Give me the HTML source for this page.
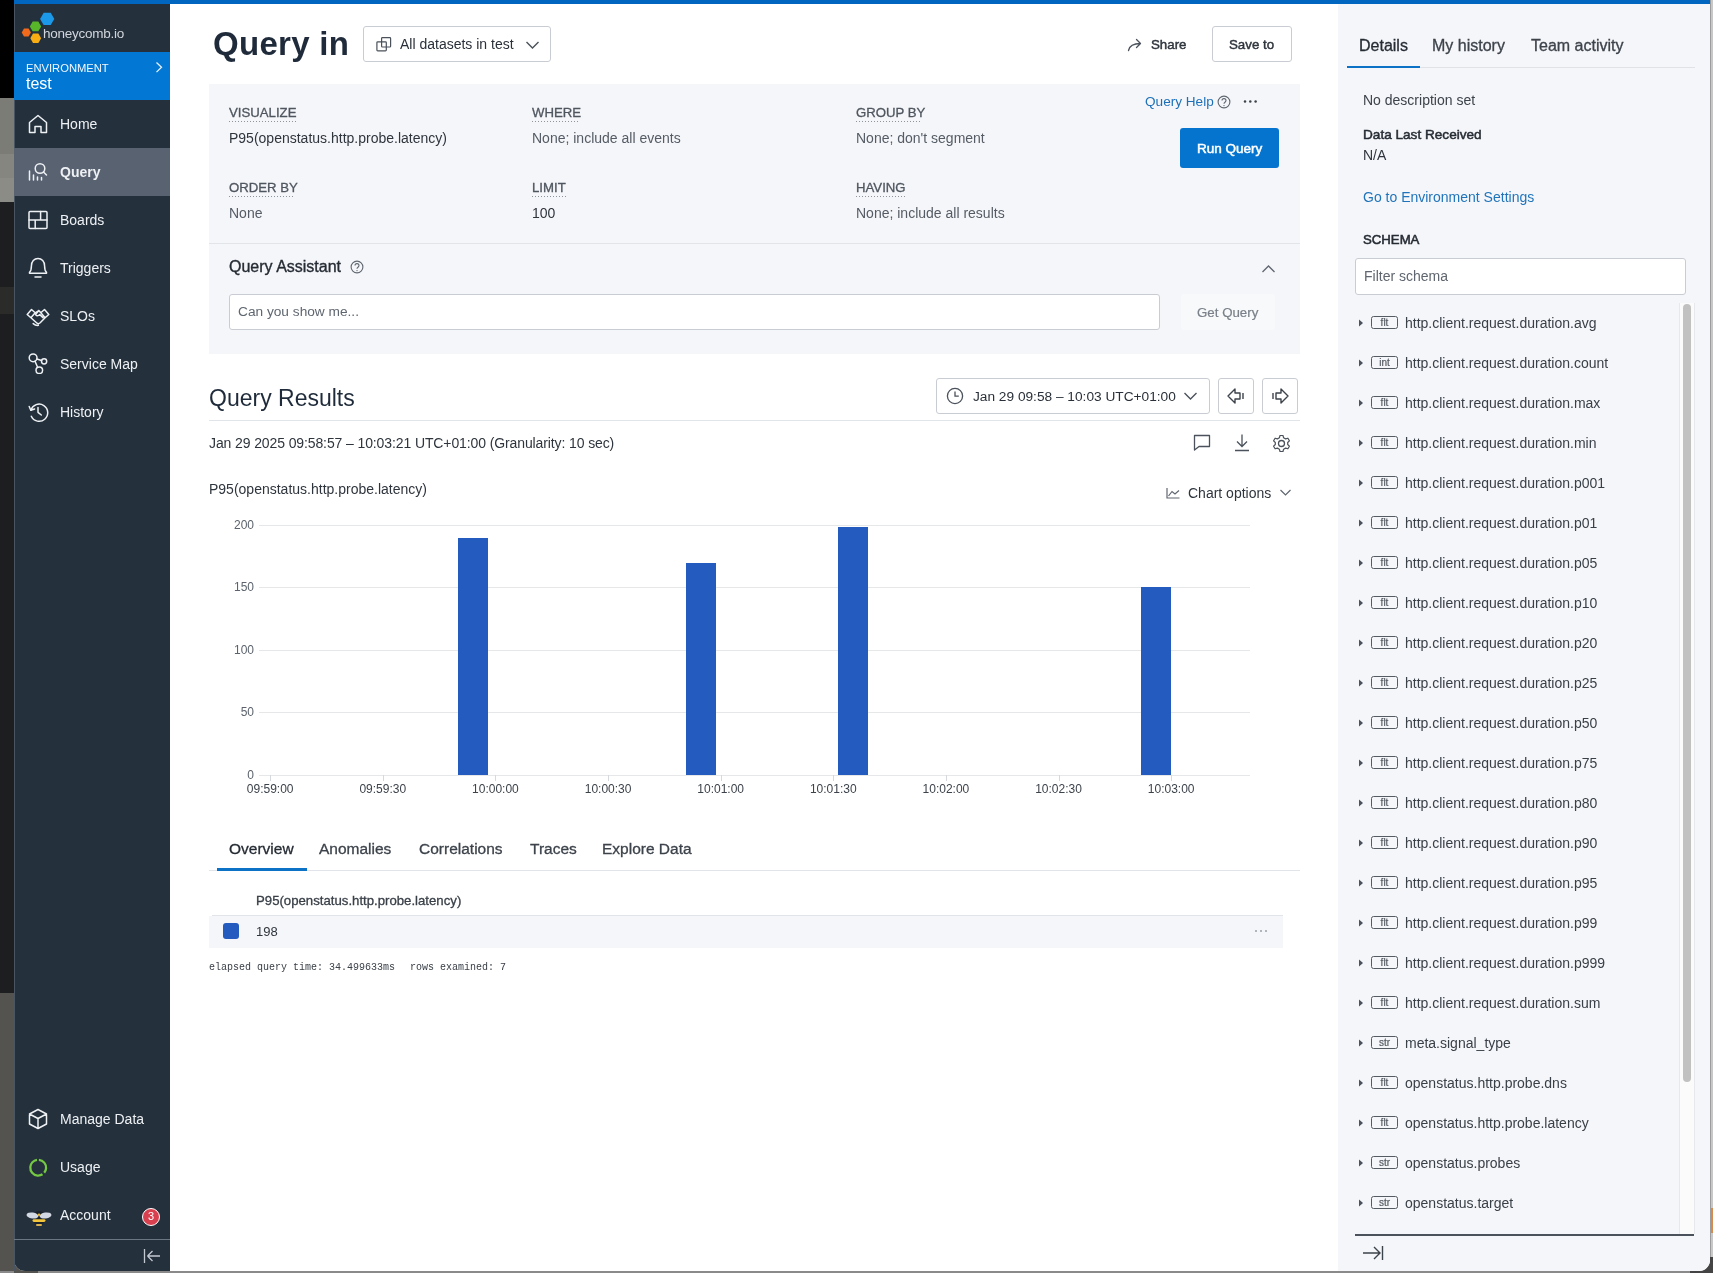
<!DOCTYPE html>
<html><head><meta charset="utf-8">
<style>
*{box-sizing:border-box;margin:0;padding:0}
html,body{width:1713px;height:1273px;overflow:hidden;background:#c8c8c8;font-family:"Liberation Sans",sans-serif;color:#2a3039}
.a{position:absolute;white-space:nowrap}
#root{position:absolute;left:0;top:0;width:1713px;height:1273px;will-change:transform}
</style></head><body>
<div id="root"><div class="a" style="left:0px;top:0px;width:14px;height:98px;background:#000"></div><div class="a" style="left:0px;top:98px;width:14px;height:56px;background:#7c7c77"></div><div class="a" style="left:0px;top:154px;width:14px;height:24px;background:#868681"></div><div class="a" style="left:0px;top:178px;width:14px;height:24px;background:#8c8c87"></div><div class="a" style="left:0px;top:202px;width:14px;height:791px;background:#1d1e20"></div><div class="a" style="left:0px;top:993px;width:14px;height:280px;background:#55534f"></div><div class="a" style="left:1710px;top:0px;width:1px;height:1273px;background:#9c9c9c"></div><div class="a" style="left:0px;top:1271px;width:1713px;height:2px;background:#8a8a8a"></div><div class="a" style="left:14px;top:1250px;width:24px;height:23px;background:#55534f"></div><div class="a" style="left:1690px;top:1257px;width:23px;height:16px;background:#444444"></div><div class="a" style="left:1711px;top:1208px;width:2px;height:25px;background:#d9894a"></div><div class="a" style="left:0px;top:287px;width:14px;height:27px;background:#2b2b29"></div><div class="a" style="left:14px;top:0px;width:1696px;height:1271px;background:#fff;border-radius:0 0 11px 11px;overflow:hidden"></div><div class="a" style="left:14px;top:0px;width:1696px;height:4px;background:#0166bf"></div><div class="a" style="left:14px;top:4px;width:156px;height:1267px;background:#24303c;border-bottom-left-radius:11px"></div><div class="a" style="left:14px;top:4px;width:1px;height:1267px;background:#4a5563"></div><div class="a" style="left:1338px;top:4px;width:372px;height:1267px;background:#f5f6f9;border-bottom-right-radius:11px"></div><svg class="a" style="left:20px;top:10px;" width="36" height="36" viewBox="0 0 36 36" fill="none"><polygon points="34.30,8.90 30.75,15.05 23.65,15.05 20.10,8.90 23.65,2.75 30.75,2.75" fill="#1c98e8"/><polygon points="21.20,16.40 18.35,21.34 12.65,21.34 9.80,16.40 12.65,11.46 18.35,11.46" fill="#58b52a"/><polygon points="10.90,22.40 8.60,26.38 4.00,26.38 1.70,22.40 4.00,18.42 8.60,18.42" fill="#f26b1d"/><polygon points="21.10,28.30 18.40,32.98 13.00,32.98 10.30,28.30 13.00,23.62 18.40,23.62" fill="#f8ad13"/></svg><div class="a" style="left:43px;top:26.52px;font-size:13.5px;line-height:13.5px;font-weight:400;color:#d2d6dc;letter-spacing:-0.25px;">honeycomb.io</div><div class="a" style="left:14px;top:52px;width:156px;height:48px;background:#0278d4"></div><div class="a" style="left:26px;top:63.48px;font-size:11.2px;line-height:11.2px;font-weight:400;color:#f2f7fc;">ENVIRONMENT</div><div class="a" style="left:26px;top:76.40px;font-size:16px;line-height:16px;font-weight:400;color:#ffffff;">test</div><svg class="a" style="left:155px;top:61px;" width="10" height="14" viewBox="0 0 10 14" fill="none"><path d="M1.5 1.5 L6.5 6.3 L1.5 11.1" stroke="#e8f1fa" stroke-width="1.3"/></svg><div class="a" style="left:14px;top:148px;width:156px;height:48px;background:#596271"></div><div class="a" style="left:60px;top:117.10px;font-size:14px;line-height:14px;font-weight:400;color:#eef1f4;">Home</div><div class="a" style="left:60px;top:165.10px;font-size:14px;line-height:14px;font-weight:700;color:#eef1f4;">Query</div><div class="a" style="left:60px;top:213.10px;font-size:14px;line-height:14px;font-weight:400;color:#eef1f4;">Boards</div><div class="a" style="left:60px;top:261.10px;font-size:14px;line-height:14px;font-weight:400;color:#eef1f4;">Triggers</div><div class="a" style="left:60px;top:309.10px;font-size:14px;line-height:14px;font-weight:400;color:#eef1f4;">SLOs</div><div class="a" style="left:60px;top:357.10px;font-size:14px;line-height:14px;font-weight:400;color:#eef1f4;">Service Map</div><div class="a" style="left:60px;top:405.10px;font-size:14px;line-height:14px;font-weight:400;color:#eef1f4;">History</div><svg class="a" style="left:28px;top:114px;" width="20" height="20" viewBox="0 0 20 20" fill="none"><path d="M1.5 8.5 L10 1.5 L18.5 8.5 V18.5 H13 V12.5 H7 V18.5 H1.5 Z" stroke="#eef1f4" stroke-width="1.5" stroke-linecap="round" stroke-linejoin="round"/></svg><svg class="a" style="left:28px;top:162px;" width="20" height="20" viewBox="0 0 20 20" fill="none"><path d="M1.5 9 V18 M5.5 13 V18 M9.5 15 V18 M13.5 15.5 V18" stroke="#eef1f4" stroke-width="1.5" stroke-linecap="round" stroke-linejoin="round"/><circle cx="12" cy="6.5" r="4.8" stroke="#eef1f4" stroke-width="1.5" stroke-linecap="round" stroke-linejoin="round"/><path d="M15.5 10 L18.5 13" stroke="#eef1f4" stroke-width="1.5" stroke-linecap="round" stroke-linejoin="round"/></svg><svg class="a" style="left:28px;top:210px;" width="20" height="20" viewBox="0 0 20 20" fill="none"><rect x="1" y="1.5" width="18" height="17" rx="1" stroke="#eef1f4" stroke-width="1.5" stroke-linecap="round" stroke-linejoin="round"/><path d="M1 10 H19 M12.6 1.5 V10 M7.2 10 V18.5" stroke="#eef1f4" stroke-width="1.5" stroke-linecap="round" stroke-linejoin="round"/></svg><svg class="a" style="left:28px;top:257px;" width="20" height="22" viewBox="0 0 20 22" fill="none"><path d="M1.5 16.3 H18.5 V15.3 C17 14 16.6 12 16.6 9 C16.6 4.6 13.8 1.5 10 1.5 C6.2 1.5 3.4 4.6 3.4 9 C3.4 12 3 14 1.5 15.3 Z M7 20 H13" stroke="#eef1f4" stroke-width="1.5" stroke-linecap="round" stroke-linejoin="round"/></svg><svg class="a" style="left:26px;top:306px;" width="24" height="22" viewBox="0 0 24 22" fill="none"><path d="M1.2 8.5 L5.5 3.5 L9.2 6.8 L4.9 11.8 Z M22.8 8.5 L18.5 3.5 L14.8 6.8 L19.1 11.8 Z M9.2 6.8 L12.8 4.6 L14.8 6.8 M4.9 11.8 L10.8 17 C11.8 17.9 13.2 17.7 14.2 16.8 L19.1 11.8 M12.8 4.6 L9.6 8.6 C10.6 10.2 12.3 10.2 13.8 8.6 L17 11.6 M7.2 17.6 C8.8 19 10.6 19.6 12.4 19.3" stroke="#eef1f4" stroke-width="1.5" stroke-linecap="round" stroke-linejoin="round" stroke-width="1.4"/></svg><svg class="a" style="left:28px;top:352px;" width="20" height="22" viewBox="0 0 20 22" fill="none"><circle cx="5.1" cy="5.8" r="3.9" stroke="#eef1f4" stroke-width="1.5" stroke-linecap="round" stroke-linejoin="round"/><circle cx="16.1" cy="9.3" r="2.6" stroke="#eef1f4" stroke-width="1.5" stroke-linecap="round" stroke-linejoin="round"/><circle cx="11.3" cy="18.2" r="3.3" stroke="#eef1f4" stroke-width="1.5" stroke-linecap="round" stroke-linejoin="round"/><path d="M8.9 7 L13.6 8.5 M7 9.2 L9.6 15.3" stroke="#eef1f4" stroke-width="1.5" stroke-linecap="round" stroke-linejoin="round"/></svg><svg class="a" style="left:27px;top:401px;" width="22" height="22" viewBox="0 0 22 22" fill="none"><path d="M2.2 5.5 L3.8 9.3 L7.6 8" stroke="#eef1f4" stroke-width="1.5" stroke-linecap="round" stroke-linejoin="round"/><path d="M3.9 9.2 A8.6 8.6 0 1 1 4.3 15.3" stroke="#eef1f4" stroke-width="1.5" stroke-linecap="round" stroke-linejoin="round"/><path d="M11 6.5 V11.3 L14.3 14" stroke="#eef1f4" stroke-width="1.5" stroke-linecap="round" stroke-linejoin="round"/></svg><div class="a" style="left:60px;top:1112.10px;font-size:14px;line-height:14px;font-weight:400;color:#eef1f4;">Manage Data</div><div class="a" style="left:60px;top:1160.10px;font-size:14px;line-height:14px;font-weight:400;color:#eef1f4;">Usage</div><div class="a" style="left:60px;top:1208.10px;font-size:14px;line-height:14px;font-weight:400;color:#eef1f4;">Account</div><svg class="a" style="left:28px;top:1108px;" width="20" height="22" viewBox="0 0 20 22" fill="none"><path d="M10 1.5 L18.5 6 V16 L10 20.5 L1.5 16 V6 Z M1.5 6 L10 10.5 L18.5 6 M10 10.5 V20.5" stroke="#eef1f4" stroke-width="1.5" stroke-linecap="round" stroke-linejoin="round"/></svg><svg class="a" style="left:28px;top:1157px;" width="22" height="22" viewBox="0 0 22 22" fill="none"><circle cx="10.2" cy="10.7" r="7.9" stroke="#74c843" stroke-width="2.3" stroke-dasharray="17.2 2.2 28 2.2" transform="rotate(-85 10.2 10.7)"/></svg><svg class="a" style="left:25px;top:1206px;" width="28" height="24" viewBox="0 0 28 24" fill="none"><ellipse cx="14" cy="12" rx="6.5" ry="7" fill="#1b222b"/><ellipse cx="7.5" cy="9.5" rx="6" ry="3" fill="#d3d9e2" transform="rotate(8 7.5 9.5)"/><ellipse cx="20.5" cy="9.5" rx="6" ry="3" fill="#d3d9e2" transform="rotate(-8 20.5 9.5)"/><circle cx="14" cy="8.8" r="1.3" fill="#e8b830"/><rect x="7.5" y="13.2" width="13" height="2.8" rx="1.4" fill="#f2c53a"/><rect x="11" y="18" width="6" height="2" rx="1" fill="#d9b050"/></svg><div class="a" style="left:142px;top:1208px;width:18px;height:18px;border-radius:50%;background:#d8404f;border:1.5px solid #fff;color:#fff;font-size:11px;line-height:15px;text-align:center">3</div><div class="a" style="left:14px;top:1239px;width:156px;height:1px;background:#6b7683"></div><svg class="a" style="left:143px;top:1248px;" width="18" height="16" viewBox="0 0 18 16" fill="none"><path d="M1.5 1 V15 M4.5 8 H17 M4.5 8 L9.5 3 M4.5 8 L9.5 13" stroke="#c3c9d1" stroke-width="1.3"/></svg><div class="a" style="left:213px;top:26.95px;font-size:33px;line-height:33px;font-weight:700;color:#1f2b3a;letter-spacing:0.3px;">Query in</div><div class="a" style="left:363px;top:26px;width:188px;height:36px;border:1px solid #c9cdd3;border-radius:3px;background:#fff"></div><svg class="a" style="left:376px;top:36px;" width="16" height="16" viewBox="0 0 16 16" fill="none"><rect x="5.6" y="1.7" width="9" height="9.3" rx="0.8" stroke="#4b525b" stroke-width="1.2"/><rect x="0.9" y="5.8" width="9.4" height="9" rx="0.8" stroke="#4b525b" stroke-width="1.2"/></svg><div class="a" style="left:400px;top:37.10px;font-size:14px;line-height:14px;font-weight:400;color:#2a3039;">All datasets in test</div><svg class="a" style="left:525px;top:39.5px;" width="16" height="10" viewBox="0 0 16 10" fill="none"><path d="M1.5 2 L7.5 8 L13.5 2" stroke="#4b525b" stroke-width="1.4"/></svg><svg class="a" style="left:1127px;top:38px;" width="16" height="14" viewBox="0 0 16 14" fill="none"><path d="M1.5 12.5 C2.5 7.5 6 5.5 13.5 5.5 M9.5 1.5 L13.5 5.5 L9.5 9.5" stroke="#4b525b" stroke-width="1.3" stroke-linecap="round" stroke-linejoin="round"/></svg><div class="a" style="left:1151px;top:37.70px;font-size:13.3px;line-height:13.3px;font-weight:400;color:#2f353d;-webkit-text-stroke:0.45px;">Share</div><div class="a" style="left:1212px;top:26px;width:80px;height:36px;border:1px solid #c9cdd3;border-radius:3px;background:#fff"></div><div class="a" style="left:1229px;top:37.70px;font-size:13.3px;line-height:13.3px;font-weight:400;color:#2f353d;-webkit-text-stroke:0.45px;">Save to</div><div class="a" style="left:209px;top:84px;width:1091px;height:270px;background:#f5f6f9"></div><div class="a" style="left:209px;top:243px;width:1091px;height:1px;background:#e1e4e8"></div><div class="a" style="left:229px;top:105.78px;font-size:13.2px;line-height:13.2px;font-weight:400;color:#4f565f;-webkit-text-stroke:0.3px;">VISUALIZE</div><div class="a" style="left:229px;top:121px;width:67px;height:1px;background-image:linear-gradient(90deg,#8e949c 50%,transparent 50%);background-size:3px 1px"></div><div class="a" style="left:532px;top:105.78px;font-size:13.2px;line-height:13.2px;font-weight:400;color:#4f565f;-webkit-text-stroke:0.3px;">WHERE</div><div class="a" style="left:532px;top:121px;width:47px;height:1px;background-image:linear-gradient(90deg,#8e949c 50%,transparent 50%);background-size:3px 1px"></div><div class="a" style="left:856px;top:105.78px;font-size:13.2px;line-height:13.2px;font-weight:400;color:#4f565f;-webkit-text-stroke:0.3px;">GROUP BY</div><div class="a" style="left:856px;top:121px;width:66px;height:1px;background-image:linear-gradient(90deg,#8e949c 50%,transparent 50%);background-size:3px 1px"></div><div class="a" style="left:229px;top:180.78px;font-size:13.2px;line-height:13.2px;font-weight:400;color:#4f565f;-webkit-text-stroke:0.3px;">ORDER BY</div><div class="a" style="left:229px;top:196px;width:65px;height:1px;background-image:linear-gradient(90deg,#8e949c 50%,transparent 50%);background-size:3px 1px"></div><div class="a" style="left:532px;top:180.78px;font-size:13.2px;line-height:13.2px;font-weight:400;color:#4f565f;-webkit-text-stroke:0.3px;">LIMIT</div><div class="a" style="left:532px;top:196px;width:36px;height:1px;background-image:linear-gradient(90deg,#8e949c 50%,transparent 50%);background-size:3px 1px"></div><div class="a" style="left:856px;top:180.78px;font-size:13.2px;line-height:13.2px;font-weight:400;color:#4f565f;-webkit-text-stroke:0.3px;">HAVING</div><div class="a" style="left:856px;top:196px;width:50px;height:1px;background-image:linear-gradient(90deg,#8e949c 50%,transparent 50%);background-size:3px 1px"></div><div class="a" style="left:229px;top:131.10px;font-size:14px;line-height:14px;font-weight:400;color:#2f353d;">P95(openstatus.http.probe.latency)</div><div class="a" style="left:532px;top:131.10px;font-size:14px;line-height:14px;font-weight:400;color:#555c65;">None; include all events</div><div class="a" style="left:856px;top:131.10px;font-size:14px;line-height:14px;font-weight:400;color:#555c65;">None; don&#39;t segment</div><div class="a" style="left:229px;top:206.10px;font-size:14px;line-height:14px;font-weight:400;color:#555c65;">None</div><div class="a" style="left:532px;top:206.10px;font-size:14px;line-height:14px;font-weight:400;color:#2f353d;">100</div><div class="a" style="left:856px;top:206.10px;font-size:14px;line-height:14px;font-weight:400;color:#555c65;">None; include all results</div><div class="a" style="left:1145px;top:95.44px;font-size:13.6px;line-height:13.6px;font-weight:400;color:#1d70b8;">Query Help</div><svg class="a" style="left:1217px;top:95px;" width="14" height="14" viewBox="0 0 14 14" fill="none"><circle cx="7" cy="7" r="5.9" stroke="#5f666f" stroke-width="1.1"/><path d="M5 5.6 C5 3 9 3 9 5.6 C9 7.2 7 7.2 7 8.8" stroke="#5f666f" stroke-width="1.1"/><circle cx="7" cy="10.6" r="0.7" fill="#5f666f"/></svg><svg class="a" style="left:1243px;top:99px;" width="15" height="5" viewBox="0 0 15 5" fill="none"><circle cx="2" cy="2.5" r="1.25" fill="#3d434b"/><circle cx="7.3" cy="2.5" r="1.25" fill="#3d434b"/><circle cx="12.6" cy="2.5" r="1.25" fill="#3d434b"/></svg><div class="a" style="left:1180px;top:128px;width:99px;height:40px;background:#0574cf;border-radius:3px"></div><div class="a" style="left:1197px;top:141.53px;font-size:13.5px;line-height:13.5px;font-weight:400;color:#ffffff;-webkit-text-stroke:0.5px;">Run Query</div><div class="a" style="left:229px;top:259.40px;font-size:16px;line-height:16px;font-weight:400;color:#262c34;-webkit-text-stroke:0.35px;">Query Assistant</div><svg class="a" style="left:350px;top:260px;" width="14" height="14" viewBox="0 0 14 14" fill="none"><circle cx="7" cy="7" r="5.9" stroke="#5f666f" stroke-width="1.1"/><path d="M5 5.6 C5 3 9 3 9 5.6 C9 7.2 7 7.2 7 8.8" stroke="#5f666f" stroke-width="1.1"/><circle cx="7" cy="10.6" r="0.7" fill="#5f666f"/></svg><svg class="a" style="left:1261px;top:264px;" width="16" height="10" viewBox="0 0 16 10" fill="none"><path d="M1.5 8 L7.5 2 L13.5 8" stroke="#5f666f" stroke-width="1.3"/></svg><div class="a" style="left:229px;top:294px;width:931px;height:36px;border:1px solid #c9cdd3;border-radius:3px;background:#fff"></div><div class="a" style="left:238px;top:305.36px;font-size:13.7px;line-height:13.7px;font-weight:400;color:#5f666f;">Can you show me...</div><div class="a" style="left:1181px;top:294px;width:94px;height:36px;background:#f8f9fb;border-radius:3px"></div><div class="a" style="left:1197px;top:305.69px;font-size:13.3px;line-height:13.3px;font-weight:400;color:#7a8089;-webkit-text-stroke:0.2px;">Get Query</div><div class="a" style="left:209px;top:387.45px;font-size:23px;line-height:23px;font-weight:400;color:#1f2b3a;">Query Results</div><div class="a" style="left:936px;top:378px;width:274px;height:36px;border:1px solid #c9cdd3;border-radius:3px;background:#fff"></div><svg class="a" style="left:946px;top:387px;" width="18" height="18" viewBox="0 0 18 18" fill="none"><circle cx="9" cy="9" r="7.6" stroke="#4b525b" stroke-width="1.3"/><path d="M9 4.5 V9.2 H12.8" stroke="#4b525b" stroke-width="1.3"/></svg><div class="a" style="left:973px;top:390.36px;font-size:13.7px;line-height:13.7px;font-weight:400;color:#2a3039;">Jan 29 09:58 – 10:03 UTC+01:00</div><svg class="a" style="left:1183px;top:391px;" width="16" height="10" viewBox="0 0 16 10" fill="none"><path d="M1.5 2 L7.5 8 L13.5 2" stroke="#4b525b" stroke-width="1.4"/></svg><div class="a" style="left:1218px;top:378px;width:36px;height:36px;border:1px solid #c9cdd3;border-radius:3px;background:#fff"></div><svg class="a" style="left:1226px;top:387px;" width="20" height="18" viewBox="0 0 20 18" fill="none"><path d="M9 2 L2 9 L9 16 V12 H14 V6 H9 Z M17 6 V12" stroke="#3d434b" stroke-width="1.4" stroke-linejoin="round"/></svg><div class="a" style="left:1262px;top:378px;width:36px;height:36px;border:1px solid #c9cdd3;border-radius:3px;background:#fff"></div><svg class="a" style="left:1270px;top:387px;" width="20" height="18" viewBox="0 0 20 18" fill="none"><path d="M11 2 L18 9 L11 16 V12 H6 V6 H11 Z M3 6 V12" stroke="#3d434b" stroke-width="1.4" stroke-linejoin="round"/></svg><div class="a" style="left:209px;top:420px;width:1091px;height:1px;background:#e1e4e8"></div><div class="a" style="left:209px;top:436.10px;font-size:14px;line-height:14px;font-weight:400;color:#2f353d;letter-spacing:-0.11px;">Jan 29 2025 09:58:57 – 10:03:21 UTC+01:00 (Granularity: 10 sec)</div><svg class="a" style="left:1193px;top:434px;" width="18" height="18" viewBox="0 0 18 18" fill="none"><path d="M1.5 1.5 H16.5 V12.5 H6 L1.5 16 Z" stroke="#4b525b" stroke-width="1.3" stroke-linejoin="round"/></svg><svg class="a" style="left:1233px;top:433px;" width="18" height="20" viewBox="0 0 18 20" fill="none"><path d="M9 1.5 V13 M4 8.5 L9 13.5 L14 8.5 M2 17.5 H16" stroke="#4b525b" stroke-width="1.3"/></svg><svg class="a" style="left:1272px;top:434px;" width="19" height="19" viewBox="0 0 19 19" fill="none"><circle cx="9.5" cy="9.5" r="3" stroke="#4b525b" stroke-width="1.3"/><path d="M8 1.5 H11 L11.6 3.8 L13.6 4.9 L15.9 4.2 L17.4 6.8 L15.7 8.5 V10.5 L17.4 12.2 L15.9 14.8 L13.6 14.1 L11.6 15.2 L11 17.5 H8 L7.4 15.2 L5.4 14.1 L3.1 14.8 L1.6 12.2 L3.3 10.5 V8.5 L1.6 6.8 L3.1 4.2 L5.4 4.9 L7.4 3.8 Z" stroke="#4b525b" stroke-width="1.2" stroke-linejoin="round"/></svg><div class="a" style="left:209px;top:482.10px;font-size:14px;line-height:14px;font-weight:400;color:#2f353d;">P95(openstatus.http.probe.latency)</div><svg class="a" style="left:1166px;top:487px;" width="15" height="12" viewBox="0 0 15 12" fill="none"><path d="M1 1 V11 H13.5 M2.5 9 L6 4.5 L9 7 L13 3.5" stroke="#5f666f" stroke-width="1.2"/></svg><div class="a" style="left:1188px;top:486.10px;font-size:14px;line-height:14px;font-weight:400;color:#2f353d;">Chart options</div><svg class="a" style="left:1279px;top:488px;" width="14" height="10" viewBox="0 0 14 10" fill="none"><path d="M1.5 2 L6.5 7 L11.5 2" stroke="#5f666f" stroke-width="1.2"/></svg><div class="a" style="left:259px;top:525px;width:991px;height:1px;background:#e6e7e9"></div><div class="a" style="left:200px;width:54px;text-align:right;top:517.8px;font-size:12px;line-height:14px;color:#5c636c">200</div><div class="a" style="left:259px;top:587px;width:991px;height:1px;background:#e6e7e9"></div><div class="a" style="left:200px;width:54px;text-align:right;top:580.3px;font-size:12px;line-height:14px;color:#5c636c">150</div><div class="a" style="left:259px;top:650px;width:991px;height:1px;background:#e6e7e9"></div><div class="a" style="left:200px;width:54px;text-align:right;top:642.7px;font-size:12px;line-height:14px;color:#5c636c">100</div><div class="a" style="left:259px;top:712px;width:991px;height:1px;background:#e6e7e9"></div><div class="a" style="left:200px;width:54px;text-align:right;top:705.2px;font-size:12px;line-height:14px;color:#5c636c">50</div><div class="a" style="left:259px;top:775px;width:991px;height:1px;background:#e6e7e9"></div><div class="a" style="left:200px;width:54px;text-align:right;top:767.7px;font-size:12px;line-height:14px;color:#5c636c">0</div><div class="a" style="left:270px;top:775px;width:1px;height:6px;background:#d5d9de"></div><div class="a" style="left:230.2px;width:80px;text-align:center;top:782.0px;font-size:12px;line-height:14px;color:#3d434b">09:59:00</div><div class="a" style="left:383px;top:775px;width:1px;height:6px;background:#d5d9de"></div><div class="a" style="left:342.8px;width:80px;text-align:center;top:782.0px;font-size:12px;line-height:14px;color:#3d434b">09:59:30</div><div class="a" style="left:495px;top:775px;width:1px;height:6px;background:#d5d9de"></div><div class="a" style="left:455.4px;width:80px;text-align:center;top:782.0px;font-size:12px;line-height:14px;color:#3d434b">10:00:00</div><div class="a" style="left:608px;top:775px;width:1px;height:6px;background:#d5d9de"></div><div class="a" style="left:568.1px;width:80px;text-align:center;top:782.0px;font-size:12px;line-height:14px;color:#3d434b">10:00:30</div><div class="a" style="left:721px;top:775px;width:1px;height:6px;background:#d5d9de"></div><div class="a" style="left:680.7px;width:80px;text-align:center;top:782.0px;font-size:12px;line-height:14px;color:#3d434b">10:01:00</div><div class="a" style="left:833px;top:775px;width:1px;height:6px;background:#d5d9de"></div><div class="a" style="left:793.3px;width:80px;text-align:center;top:782.0px;font-size:12px;line-height:14px;color:#3d434b">10:01:30</div><div class="a" style="left:946px;top:775px;width:1px;height:6px;background:#d5d9de"></div><div class="a" style="left:905.9px;width:80px;text-align:center;top:782.0px;font-size:12px;line-height:14px;color:#3d434b">10:02:00</div><div class="a" style="left:1059px;top:775px;width:1px;height:6px;background:#d5d9de"></div><div class="a" style="left:1018.5px;width:80px;text-align:center;top:782.0px;font-size:12px;line-height:14px;color:#3d434b">10:02:30</div><div class="a" style="left:1171px;top:775px;width:1px;height:6px;background:#d5d9de"></div><div class="a" style="left:1131.2px;width:80px;text-align:center;top:782.0px;font-size:12px;line-height:14px;color:#3d434b">10:03:00</div><div class="a" style="left:458px;top:538px;width:30px;height:237px;background:#235bbe"></div><div class="a" style="left:686px;top:563px;width:30px;height:212px;background:#235bbe"></div><div class="a" style="left:838px;top:527px;width:30px;height:248px;background:#235bbe"></div><div class="a" style="left:1141px;top:587px;width:30px;height:188px;background:#235bbe"></div><div class="a" style="left:229px;top:840.83px;font-size:15.5px;line-height:15.5px;font-weight:400;color:#262c34;-webkit-text-stroke:0.3px;">Overview</div><div class="a" style="left:319px;top:840.83px;font-size:15.5px;line-height:15.5px;font-weight:400;color:#3d434b;-webkit-text-stroke:0.3px;">Anomalies</div><div class="a" style="left:419px;top:840.83px;font-size:15.5px;line-height:15.5px;font-weight:400;color:#3d434b;-webkit-text-stroke:0.3px;">Correlations</div><div class="a" style="left:530px;top:840.83px;font-size:15.5px;line-height:15.5px;font-weight:400;color:#3d434b;-webkit-text-stroke:0.3px;">Traces</div><div class="a" style="left:602px;top:840.83px;font-size:15.5px;line-height:15.5px;font-weight:400;color:#3d434b;-webkit-text-stroke:0.3px;">Explore Data</div><div class="a" style="left:209px;top:870px;width:1091px;height:1px;background:#e1e4e8"></div><div class="a" style="left:217px;top:868px;width:90px;height:3px;background:#0b72c6"></div><div class="a" style="left:256px;top:893.78px;font-size:13.2px;line-height:13.2px;font-weight:400;color:#3a4048;-webkit-text-stroke:0.3px;">P95(openstatus.http.probe.latency)</div><div class="a" style="left:212px;top:915px;width:1071px;height:1px;background:#e1e4e8"></div><div class="a" style="left:209px;top:916px;width:1074px;height:32px;background:#f5f6f9"></div><div class="a" style="left:223px;top:923px;width:16px;height:16px;background:#235bbe;border-radius:3px"></div><div class="a" style="left:256px;top:924.95px;font-size:13px;line-height:13px;font-weight:400;color:#2f353d;">198</div><svg class="a" style="left:1254px;top:929px;" width="15" height="4" viewBox="0 0 15 4" fill="none"><circle cx="2" cy="2" r="1" fill="#9aa0a7"/><circle cx="7" cy="2" r="1" fill="#9aa0a7"/><circle cx="12" cy="2" r="1" fill="#9aa0a7"/></svg><div class="a" style="left:209px;top:962.50px;font-size:10px;line-height:10px;font-weight:400;color:#3a4048;font-family:'Liberation Mono',monospace;">elapsed query time: 34.499633ms</div><div class="a" style="left:410px;top:962.50px;font-size:10px;line-height:10px;font-weight:400;color:#3a4048;font-family:'Liberation Mono',monospace;">rows examined: 7</div><div class="a" style="left:1359px;top:38.40px;font-size:16px;line-height:16px;font-weight:400;color:#262c34;-webkit-text-stroke:0.3px;">Details</div><div class="a" style="left:1432px;top:38.40px;font-size:16px;line-height:16px;font-weight:400;color:#3d434b;-webkit-text-stroke:0.3px;">My history</div><div class="a" style="left:1531px;top:38.40px;font-size:16px;line-height:16px;font-weight:400;color:#3d434b;-webkit-text-stroke:0.3px;">Team activity</div><div class="a" style="left:1347px;top:67px;width:348px;height:1px;background:#dfe2e6"></div><div class="a" style="left:1347px;top:66px;width:73px;height:2px;background:#0b72c6"></div><div class="a" style="left:1363px;top:93.10px;font-size:14px;line-height:14px;font-weight:400;color:#3d434b;">No description set</div><div class="a" style="left:1363px;top:128.44px;font-size:13.6px;line-height:13.6px;font-weight:400;color:#262c34;-webkit-text-stroke:0.5px;">Data Last Received</div><div class="a" style="left:1363px;top:148.10px;font-size:14px;line-height:14px;font-weight:400;color:#2f353d;">N/A</div><div class="a" style="left:1363px;top:190.10px;font-size:14px;line-height:14px;font-weight:400;color:#1f74bb;">Go to Environment Settings</div><div class="a" style="left:1363px;top:232.78px;font-size:13.2px;line-height:13.2px;font-weight:400;color:#262c34;-webkit-text-stroke:0.55px;">SCHEMA</div><div class="a" style="left:1355px;top:258px;width:331px;height:37px;border:1px solid #c9cdd3;border-radius:3px;background:#fff"></div><div class="a" style="left:1364px;top:269.10px;font-size:14px;line-height:14px;font-weight:400;color:#5f666f;">Filter schema</div><div class="a" style="left:1680px;top:303px;width:14px;height:931px;background:#fbfbfb"></div><div class="a" style="left:1679px;top:303px;width:1px;height:932px;background:#e6e8eb"></div><div class="a" style="left:1683px;top:304px;width:8px;height:778px;background:#c1c1c1;border-radius:4px"></div><svg class="a" style="left:1358px;top:319px;" width="6" height="8" viewBox="0 0 6 8" fill="none"><path d="M1 0.5 L5 4 L1 7.5 Z" fill="#4b525b"/></svg><div class="a" style="left:1371px;top:316px;width:27px;height:13px;border:1.3px solid #555b63;border-radius:2.5px"></div><div class="a" style="left:1371px;top:317.70px;width:27px;font-size:10px;line-height:10px;text-align:center;color:#555b63;-webkit-text-stroke:0.2px">flt</div><div class="a" style="left:1405px;top:316.10px;font-size:14px;line-height:14px;font-weight:400;color:#3a4048;">http.client.request.duration.avg</div><svg class="a" style="left:1358px;top:359px;" width="6" height="8" viewBox="0 0 6 8" fill="none"><path d="M1 0.5 L5 4 L1 7.5 Z" fill="#4b525b"/></svg><div class="a" style="left:1371px;top:356px;width:27px;height:13px;border:1.3px solid #555b63;border-radius:2.5px"></div><div class="a" style="left:1371px;top:357.70px;width:27px;font-size:10px;line-height:10px;text-align:center;color:#555b63;-webkit-text-stroke:0.2px">int</div><div class="a" style="left:1405px;top:356.10px;font-size:14px;line-height:14px;font-weight:400;color:#3a4048;">http.client.request.duration.count</div><svg class="a" style="left:1358px;top:399px;" width="6" height="8" viewBox="0 0 6 8" fill="none"><path d="M1 0.5 L5 4 L1 7.5 Z" fill="#4b525b"/></svg><div class="a" style="left:1371px;top:396px;width:27px;height:13px;border:1.3px solid #555b63;border-radius:2.5px"></div><div class="a" style="left:1371px;top:397.70px;width:27px;font-size:10px;line-height:10px;text-align:center;color:#555b63;-webkit-text-stroke:0.2px">flt</div><div class="a" style="left:1405px;top:396.10px;font-size:14px;line-height:14px;font-weight:400;color:#3a4048;">http.client.request.duration.max</div><svg class="a" style="left:1358px;top:439px;" width="6" height="8" viewBox="0 0 6 8" fill="none"><path d="M1 0.5 L5 4 L1 7.5 Z" fill="#4b525b"/></svg><div class="a" style="left:1371px;top:436px;width:27px;height:13px;border:1.3px solid #555b63;border-radius:2.5px"></div><div class="a" style="left:1371px;top:437.70px;width:27px;font-size:10px;line-height:10px;text-align:center;color:#555b63;-webkit-text-stroke:0.2px">flt</div><div class="a" style="left:1405px;top:436.10px;font-size:14px;line-height:14px;font-weight:400;color:#3a4048;">http.client.request.duration.min</div><svg class="a" style="left:1358px;top:479px;" width="6" height="8" viewBox="0 0 6 8" fill="none"><path d="M1 0.5 L5 4 L1 7.5 Z" fill="#4b525b"/></svg><div class="a" style="left:1371px;top:476px;width:27px;height:13px;border:1.3px solid #555b63;border-radius:2.5px"></div><div class="a" style="left:1371px;top:477.70px;width:27px;font-size:10px;line-height:10px;text-align:center;color:#555b63;-webkit-text-stroke:0.2px">flt</div><div class="a" style="left:1405px;top:476.10px;font-size:14px;line-height:14px;font-weight:400;color:#3a4048;">http.client.request.duration.p001</div><svg class="a" style="left:1358px;top:519px;" width="6" height="8" viewBox="0 0 6 8" fill="none"><path d="M1 0.5 L5 4 L1 7.5 Z" fill="#4b525b"/></svg><div class="a" style="left:1371px;top:516px;width:27px;height:13px;border:1.3px solid #555b63;border-radius:2.5px"></div><div class="a" style="left:1371px;top:517.70px;width:27px;font-size:10px;line-height:10px;text-align:center;color:#555b63;-webkit-text-stroke:0.2px">flt</div><div class="a" style="left:1405px;top:516.10px;font-size:14px;line-height:14px;font-weight:400;color:#3a4048;">http.client.request.duration.p01</div><svg class="a" style="left:1358px;top:559px;" width="6" height="8" viewBox="0 0 6 8" fill="none"><path d="M1 0.5 L5 4 L1 7.5 Z" fill="#4b525b"/></svg><div class="a" style="left:1371px;top:556px;width:27px;height:13px;border:1.3px solid #555b63;border-radius:2.5px"></div><div class="a" style="left:1371px;top:557.70px;width:27px;font-size:10px;line-height:10px;text-align:center;color:#555b63;-webkit-text-stroke:0.2px">flt</div><div class="a" style="left:1405px;top:556.10px;font-size:14px;line-height:14px;font-weight:400;color:#3a4048;">http.client.request.duration.p05</div><svg class="a" style="left:1358px;top:599px;" width="6" height="8" viewBox="0 0 6 8" fill="none"><path d="M1 0.5 L5 4 L1 7.5 Z" fill="#4b525b"/></svg><div class="a" style="left:1371px;top:596px;width:27px;height:13px;border:1.3px solid #555b63;border-radius:2.5px"></div><div class="a" style="left:1371px;top:597.70px;width:27px;font-size:10px;line-height:10px;text-align:center;color:#555b63;-webkit-text-stroke:0.2px">flt</div><div class="a" style="left:1405px;top:596.10px;font-size:14px;line-height:14px;font-weight:400;color:#3a4048;">http.client.request.duration.p10</div><svg class="a" style="left:1358px;top:639px;" width="6" height="8" viewBox="0 0 6 8" fill="none"><path d="M1 0.5 L5 4 L1 7.5 Z" fill="#4b525b"/></svg><div class="a" style="left:1371px;top:636px;width:27px;height:13px;border:1.3px solid #555b63;border-radius:2.5px"></div><div class="a" style="left:1371px;top:637.70px;width:27px;font-size:10px;line-height:10px;text-align:center;color:#555b63;-webkit-text-stroke:0.2px">flt</div><div class="a" style="left:1405px;top:636.10px;font-size:14px;line-height:14px;font-weight:400;color:#3a4048;">http.client.request.duration.p20</div><svg class="a" style="left:1358px;top:679px;" width="6" height="8" viewBox="0 0 6 8" fill="none"><path d="M1 0.5 L5 4 L1 7.5 Z" fill="#4b525b"/></svg><div class="a" style="left:1371px;top:676px;width:27px;height:13px;border:1.3px solid #555b63;border-radius:2.5px"></div><div class="a" style="left:1371px;top:677.70px;width:27px;font-size:10px;line-height:10px;text-align:center;color:#555b63;-webkit-text-stroke:0.2px">flt</div><div class="a" style="left:1405px;top:676.10px;font-size:14px;line-height:14px;font-weight:400;color:#3a4048;">http.client.request.duration.p25</div><svg class="a" style="left:1358px;top:719px;" width="6" height="8" viewBox="0 0 6 8" fill="none"><path d="M1 0.5 L5 4 L1 7.5 Z" fill="#4b525b"/></svg><div class="a" style="left:1371px;top:716px;width:27px;height:13px;border:1.3px solid #555b63;border-radius:2.5px"></div><div class="a" style="left:1371px;top:717.70px;width:27px;font-size:10px;line-height:10px;text-align:center;color:#555b63;-webkit-text-stroke:0.2px">flt</div><div class="a" style="left:1405px;top:716.10px;font-size:14px;line-height:14px;font-weight:400;color:#3a4048;">http.client.request.duration.p50</div><svg class="a" style="left:1358px;top:759px;" width="6" height="8" viewBox="0 0 6 8" fill="none"><path d="M1 0.5 L5 4 L1 7.5 Z" fill="#4b525b"/></svg><div class="a" style="left:1371px;top:756px;width:27px;height:13px;border:1.3px solid #555b63;border-radius:2.5px"></div><div class="a" style="left:1371px;top:757.70px;width:27px;font-size:10px;line-height:10px;text-align:center;color:#555b63;-webkit-text-stroke:0.2px">flt</div><div class="a" style="left:1405px;top:756.10px;font-size:14px;line-height:14px;font-weight:400;color:#3a4048;">http.client.request.duration.p75</div><svg class="a" style="left:1358px;top:799px;" width="6" height="8" viewBox="0 0 6 8" fill="none"><path d="M1 0.5 L5 4 L1 7.5 Z" fill="#4b525b"/></svg><div class="a" style="left:1371px;top:796px;width:27px;height:13px;border:1.3px solid #555b63;border-radius:2.5px"></div><div class="a" style="left:1371px;top:797.70px;width:27px;font-size:10px;line-height:10px;text-align:center;color:#555b63;-webkit-text-stroke:0.2px">flt</div><div class="a" style="left:1405px;top:796.10px;font-size:14px;line-height:14px;font-weight:400;color:#3a4048;">http.client.request.duration.p80</div><svg class="a" style="left:1358px;top:839px;" width="6" height="8" viewBox="0 0 6 8" fill="none"><path d="M1 0.5 L5 4 L1 7.5 Z" fill="#4b525b"/></svg><div class="a" style="left:1371px;top:836px;width:27px;height:13px;border:1.3px solid #555b63;border-radius:2.5px"></div><div class="a" style="left:1371px;top:837.70px;width:27px;font-size:10px;line-height:10px;text-align:center;color:#555b63;-webkit-text-stroke:0.2px">flt</div><div class="a" style="left:1405px;top:836.10px;font-size:14px;line-height:14px;font-weight:400;color:#3a4048;">http.client.request.duration.p90</div><svg class="a" style="left:1358px;top:879px;" width="6" height="8" viewBox="0 0 6 8" fill="none"><path d="M1 0.5 L5 4 L1 7.5 Z" fill="#4b525b"/></svg><div class="a" style="left:1371px;top:876px;width:27px;height:13px;border:1.3px solid #555b63;border-radius:2.5px"></div><div class="a" style="left:1371px;top:877.70px;width:27px;font-size:10px;line-height:10px;text-align:center;color:#555b63;-webkit-text-stroke:0.2px">flt</div><div class="a" style="left:1405px;top:876.10px;font-size:14px;line-height:14px;font-weight:400;color:#3a4048;">http.client.request.duration.p95</div><svg class="a" style="left:1358px;top:919px;" width="6" height="8" viewBox="0 0 6 8" fill="none"><path d="M1 0.5 L5 4 L1 7.5 Z" fill="#4b525b"/></svg><div class="a" style="left:1371px;top:916px;width:27px;height:13px;border:1.3px solid #555b63;border-radius:2.5px"></div><div class="a" style="left:1371px;top:917.70px;width:27px;font-size:10px;line-height:10px;text-align:center;color:#555b63;-webkit-text-stroke:0.2px">flt</div><div class="a" style="left:1405px;top:916.10px;font-size:14px;line-height:14px;font-weight:400;color:#3a4048;">http.client.request.duration.p99</div><svg class="a" style="left:1358px;top:959px;" width="6" height="8" viewBox="0 0 6 8" fill="none"><path d="M1 0.5 L5 4 L1 7.5 Z" fill="#4b525b"/></svg><div class="a" style="left:1371px;top:956px;width:27px;height:13px;border:1.3px solid #555b63;border-radius:2.5px"></div><div class="a" style="left:1371px;top:957.70px;width:27px;font-size:10px;line-height:10px;text-align:center;color:#555b63;-webkit-text-stroke:0.2px">flt</div><div class="a" style="left:1405px;top:956.10px;font-size:14px;line-height:14px;font-weight:400;color:#3a4048;">http.client.request.duration.p999</div><svg class="a" style="left:1358px;top:999px;" width="6" height="8" viewBox="0 0 6 8" fill="none"><path d="M1 0.5 L5 4 L1 7.5 Z" fill="#4b525b"/></svg><div class="a" style="left:1371px;top:996px;width:27px;height:13px;border:1.3px solid #555b63;border-radius:2.5px"></div><div class="a" style="left:1371px;top:997.70px;width:27px;font-size:10px;line-height:10px;text-align:center;color:#555b63;-webkit-text-stroke:0.2px">flt</div><div class="a" style="left:1405px;top:996.10px;font-size:14px;line-height:14px;font-weight:400;color:#3a4048;">http.client.request.duration.sum</div><svg class="a" style="left:1358px;top:1039px;" width="6" height="8" viewBox="0 0 6 8" fill="none"><path d="M1 0.5 L5 4 L1 7.5 Z" fill="#4b525b"/></svg><div class="a" style="left:1371px;top:1036px;width:27px;height:13px;border:1.3px solid #555b63;border-radius:2.5px"></div><div class="a" style="left:1371px;top:1037.70px;width:27px;font-size:10px;line-height:10px;text-align:center;color:#555b63;-webkit-text-stroke:0.2px">str</div><div class="a" style="left:1405px;top:1036.10px;font-size:14px;line-height:14px;font-weight:400;color:#3a4048;">meta.signal_type</div><svg class="a" style="left:1358px;top:1079px;" width="6" height="8" viewBox="0 0 6 8" fill="none"><path d="M1 0.5 L5 4 L1 7.5 Z" fill="#4b525b"/></svg><div class="a" style="left:1371px;top:1076px;width:27px;height:13px;border:1.3px solid #555b63;border-radius:2.5px"></div><div class="a" style="left:1371px;top:1077.70px;width:27px;font-size:10px;line-height:10px;text-align:center;color:#555b63;-webkit-text-stroke:0.2px">flt</div><div class="a" style="left:1405px;top:1076.10px;font-size:14px;line-height:14px;font-weight:400;color:#3a4048;">openstatus.http.probe.dns</div><svg class="a" style="left:1358px;top:1119px;" width="6" height="8" viewBox="0 0 6 8" fill="none"><path d="M1 0.5 L5 4 L1 7.5 Z" fill="#4b525b"/></svg><div class="a" style="left:1371px;top:1116px;width:27px;height:13px;border:1.3px solid #555b63;border-radius:2.5px"></div><div class="a" style="left:1371px;top:1117.70px;width:27px;font-size:10px;line-height:10px;text-align:center;color:#555b63;-webkit-text-stroke:0.2px">flt</div><div class="a" style="left:1405px;top:1116.10px;font-size:14px;line-height:14px;font-weight:400;color:#3a4048;">openstatus.http.probe.latency</div><svg class="a" style="left:1358px;top:1159px;" width="6" height="8" viewBox="0 0 6 8" fill="none"><path d="M1 0.5 L5 4 L1 7.5 Z" fill="#4b525b"/></svg><div class="a" style="left:1371px;top:1156px;width:27px;height:13px;border:1.3px solid #555b63;border-radius:2.5px"></div><div class="a" style="left:1371px;top:1157.70px;width:27px;font-size:10px;line-height:10px;text-align:center;color:#555b63;-webkit-text-stroke:0.2px">str</div><div class="a" style="left:1405px;top:1156.10px;font-size:14px;line-height:14px;font-weight:400;color:#3a4048;">openstatus.probes</div><svg class="a" style="left:1358px;top:1199px;" width="6" height="8" viewBox="0 0 6 8" fill="none"><path d="M1 0.5 L5 4 L1 7.5 Z" fill="#4b525b"/></svg><div class="a" style="left:1371px;top:1196px;width:27px;height:13px;border:1.3px solid #555b63;border-radius:2.5px"></div><div class="a" style="left:1371px;top:1197.70px;width:27px;font-size:10px;line-height:10px;text-align:center;color:#555b63;-webkit-text-stroke:0.2px">str</div><div class="a" style="left:1405px;top:1196.10px;font-size:14px;line-height:14px;font-weight:400;color:#3a4048;">openstatus.target</div><div class="a" style="left:1355px;top:1234px;width:339px;height:2px;background:#4b525b"></div><div class="a" style="left:1694px;top:303px;width:1px;height:931px;background:#e6e8eb"></div><svg class="a" style="left:1362px;top:1244px;" width="22" height="18" viewBox="0 0 22 18" fill="none"><path d="M1 9 H18 M12 3 L18 9 L12 15 M20.5 2 V16" stroke="#3d434b" stroke-width="1.4"/></svg>
</div></body></html>
